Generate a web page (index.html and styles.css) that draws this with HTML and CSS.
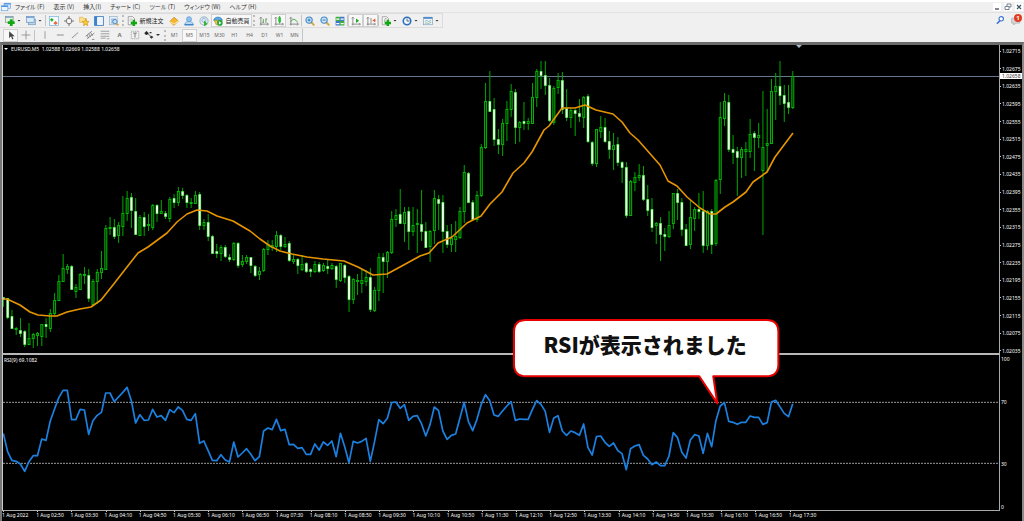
FILE: index.html
```html
<!DOCTYPE html>
<html lang="ja">
<head>
<meta charset="utf-8">
<title>EURUSD,M5</title>
<link rel="stylesheet" href="styles.css">
</head>
<body>
<header class="menubar">
  <svg class="icon" viewBox="0 0 16 16"><rect x="5" y="2" width="10" height="8" fill="#d8ebfc" stroke="#5b9bdc"/><rect x="1" y="6" width="10" height="8" fill="#eef7ff" stroke="#5b9bdc"/><path d="M1 7h10M5 3h10" stroke="#4a90e0" stroke-width="2"/></svg>
  <nav class="menus">
    <button class="menu">ファイル (F)</button>
    <button class="menu">表示 (V)</button>
    <button class="menu">挿入(I)</button>
    <button class="menu">チャート (C)</button>
    <button class="menu">ツール (T)</button>
    <button class="menu">ウィンドウ (W)</button>
    <button class="menu">ヘルプ (H)</button>
  </nav>
  <div class="window-controls">
    <button class="winbtn" aria-label="最小化"><svg viewBox="0 0 8 8"><path d="M2 6h4" stroke="#556" stroke-width="1.4"/></svg></button>
    <button class="winbtn" aria-label="元に戻す"><svg viewBox="0 0 8 8"><path d="M3 3V1h4v3H5M1 3.500h4v3H1z" fill="none" stroke="#567" stroke-width=".8"/></svg></button>
    <button class="winbtn" aria-label="閉じる"><svg viewBox="0 0 8 8"><path d="M2 2l4 4M6 2L2 6" stroke="#456" stroke-width="1.200"/></svg></button>
  </div>
</header>

<div class="toolrow">
  <div class="toolbar framed">
    <button class="tool drop" aria-label="新規チャート"><svg class="icon" viewBox="0 0 16 16"><rect x="1" y="1" width="12" height="9" fill="#e8f3e8" stroke="#6b8a76"/><path d="M1 2h12" stroke="#7fa6c8" stroke-width="2"/><path d="M10 5v11M4.500 10.500h11" stroke="#12a812" stroke-width="4.500"/></svg><i class="caret"></i></button>
    <button class="tool drop" aria-label="定型チャート"><svg class="icon" viewBox="0 0 16 16"><rect x="4" y="5" width="11" height="9" fill="#b9d3ea" stroke="#6f93b5"/><rect x="1" y="1" width="12" height="9" fill="#d9ebfa" stroke="#5c88b4"/><path d="M1 2h12" stroke="#6f9fd0" stroke-width="2"/></svg><i class="caret"></i></button>
    <span class="sep"></span>
    <button class="tool" aria-label="気配値表示"><svg class="icon" viewBox="0 0 16 16"><rect x="1" y="1" width="14" height="14" fill="#f4fbff" stroke="#6aa8d8"/><path d="M4.500 3l3 3-3 3-3-3z" fill="#22b022"/><path d="M10.500 8l3.500 3.500-3.500 3-3.500-3z" fill="#e86a3a"/></svg></button>
    <button class="tool" aria-label="データウィンドウ"><svg class="icon" viewBox="0 0 16 16"><circle cx="8" cy="8" r="4.500" fill="#f7f7f7" stroke="#777" stroke-width="1.500"/><path d="M8 0v5M8 11v5M0 8h5M11 8h5" stroke="#777" stroke-width="1.800"/></svg></button>
    <button class="tool" aria-label="ナビゲーター"><svg class="icon" viewBox="0 0 16 16"><path d="M1 2h5l1 2h5v6H1z" fill="#ffe28a" stroke="#d9a83c"/><path d="M10.500 5l1.600 3.500 3.900.3-3 2.600.9 4-3.400-2-3.400 2 .9-4-3-2.600 3.900-.3z" fill="#ffc93c" stroke="#c98f14"/></svg></button>
    <button class="tool" aria-label="ターミナル"><svg class="icon" viewBox="0 0 16 16"><rect x="1" y="1" width="14" height="14" fill="#fff" stroke="#3f7fc4" stroke-width="1.500"/><rect x="1" y="1" width="4" height="14" fill="#3c82d0"/><path d="M7 5h6M7 8h6M7 11h6" stroke="#c8d6e4"/></svg></button>
    <button class="tool" aria-label="ストラテジーテスター"><svg class="icon" viewBox="0 0 16 16"><rect x="1" y="1" width="12" height="13" fill="#e9f3fb" stroke="#86aac8"/><path d="M3 5h8M3 8h4M3 11h4" stroke="#7ba3c8" stroke-width="1.500"/><circle cx="9.500" cy="9" r="3.500" fill="#bfe0fa" stroke="#4a82b8" stroke-width="1.500"/><path d="M12 12l3 3" stroke="#d9a030" stroke-width="2.500"/></svg></button>
    <span class="grip"></span>
    <button class="tool label"><svg class="icon" viewBox="0 0 16 16"><path d="M2 1h7l3 3v10H2z" fill="#fafafa" stroke="#777"/><path d="M4 5h5M4 8h4" stroke="#999"/><path d="M11 6v10M6 11h10" stroke="#12a812" stroke-width="4"/></svg>新規注文</button>
    <button class="tool" aria-label="メタエディター"><svg class="icon" viewBox="0 0 16 16"><path d="M1 9l7-7 7 6-7 7z" fill="#f6b62c" stroke="#b97b12"/><path d="M1 9l7 4 7-5" fill="none" stroke="#fff0b8" stroke-width="1.500"/></svg></button>
    <button class="tool" aria-label="アカウント"><svg class="icon" viewBox="0 0 16 16"><circle cx="8" cy="5" r="4" fill="#8fc2ef" stroke="#4d90cf"/><path d="M2 11c2-3 10-3 12 0l1 3H1z" fill="#b9dbf7" stroke="#4d90cf"/><path d="M1 14h14" stroke="#3a7fc4" stroke-width="2"/></svg></button>
    <button class="tool" aria-label="シグナル"><svg class="icon" viewBox="0 0 16 16"><circle cx="8" cy="8" r="6.500" fill="none" stroke="#a9bfd0" stroke-width="2"/><circle cx="8" cy="7" r="3.500" fill="#cfe6f6" stroke="#7ba7c8"/><path d="M9 8v7l4-3" fill="#35b435" stroke="#35b435" stroke-width="2"/></svg></button>
    <button class="tool label pressed"><svg class="icon" viewBox="0 0 16 16"><path d="M1 7c1-7 13-7 14 0z" fill="#55a9e6" stroke="#2f78b4"/><path d="M2 7h12l-2 7H5z" fill="#f4c448" stroke="#b88a20"/><circle cx="11" cy="11" r="4.500" fill="#20a838"/><path d="M9.500 8.500v5l4-2.500z" fill="#fff"/></svg>自動売買</button>
    <span class="grip"></span>
    <button class="tool" aria-label="バーチャート"><svg class="icon" viewBox="0 0 16 16"><path d="M3 15V2M1 13h14M1 4l2-2 2 2M13 11l2 2-2 2" fill="none" stroke="#777" stroke-width="1.300"/><path d="M7 5v6M7 10H5M11 4v7M11 5h2" stroke="#5aa05a" stroke-width="1.500"/></svg></button>
    <button class="tool pressed" aria-label="ローソク足"><svg class="icon" viewBox="0 0 16 16"><path d="M3 15V2M1 13h14M1 4l2-2 2 2M13 11l2 2-2 2" fill="none" stroke="#777" stroke-width="1.300"/><path d="M9 0v12" stroke="#159015" stroke-width="1.300"/><rect x="7" y="2" width="4" height="8" fill="#20c030"/></svg></button>
    <button class="tool" aria-label="ラインチャート"><svg class="icon" viewBox="0 0 16 16"><path d="M3 15V2M1 13h14M1 4l2-2 2 2M13 11l2 2-2 2" fill="none" stroke="#777" stroke-width="1.300"/><path d="M3 9c4-6 6-4 11 1" fill="none" stroke="#30a030" stroke-width="1.500"/></svg></button>
    <span class="sep"></span>
    <button class="tool" aria-label="ズームイン"><svg class="icon" viewBox="0 0 16 16"><path d="M10 10l5 5" stroke="#d8a830" stroke-width="3"/><circle cx="6.500" cy="6.500" r="5" fill="#cfe8fb" stroke="#3f86c6" stroke-width="1.800"/><path d="M4 6.500h5M6.500 4v5" stroke="#2f6fb0" stroke-width="1.500"/></svg></button>
    <button class="tool" aria-label="ズームアウト"><svg class="icon" viewBox="0 0 16 16"><path d="M10 10l5 5" stroke="#d8a830" stroke-width="3"/><circle cx="6.500" cy="6.500" r="5" fill="#cfe8fb" stroke="#3f86c6" stroke-width="1.800"/><path d="M4 6.500h5" stroke="#2f6fb0" stroke-width="1.500"/></svg></button>
    <button class="tool" aria-label="整列"><svg class="icon" viewBox="0 0 16 16"><path d="M1 1h7v7H1zM8 8h7v7H8z" fill="#3fae3f"/><path d="M8 1h7v7H8zM1 8h7v7H1z" fill="#3f78c8"/><path d="M2 5h5M9 5h5M2 12h5M9 12h5" stroke="#fff" stroke-width="2"/></svg></button>
    <span class="sep"></span>
    <button class="tool pressed" aria-label="自動スクロール"><svg class="icon" viewBox="0 0 16 16"><path d="M3 15V2M1 13h14M1 4l2-2 2 2M13 11l2 2-2 2" fill="none" stroke="#777" stroke-width="1.300"/><path d="M8 4l5 3.500L8 11z" fill="#25a525"/></svg></button>
    <button class="tool pressed" aria-label="チャートシフト"><svg class="icon" viewBox="0 0 16 16"><path d="M3 15V2M1 13h14M1 4l2-2 2 2M13 11l2 2-2 2M8 3v9" fill="none" stroke="#777" stroke-width="1.300"/><path d="M15 4v6l-5-3z" fill="#d85a30"/></svg></button>
    <span class="sep"></span>
    <button class="tool drop" aria-label="インディケータ"><svg class="icon" viewBox="0 0 16 16"><path d="M2 1h7l3 3v10H2z" fill="#f4f4f4" stroke="#888"/><path d="M6 10c0-6 0-6 3-6" fill="none" stroke="#777"/><path d="M11 6v10M6 11h10" stroke="#12a812" stroke-width="4"/></svg><i class="caret"></i></button>
    <button class="tool drop" aria-label="時間軸"><svg class="icon" viewBox="0 0 16 16"><circle cx="8" cy="8" r="6" fill="#eaf4fd" stroke="#2c6fb8" stroke-width="2.500"/><path d="M8 4v4h4" fill="none" stroke="#456" stroke-width="1.300"/></svg><i class="caret"></i></button>
    <button class="tool drop" aria-label="定型"><svg class="icon" viewBox="0 0 16 16"><rect x="1" y="2" width="14" height="12" fill="#eaf3fb" stroke="#7a9cba"/><path d="M1 3h14" stroke="#4f8ac4" stroke-width="3"/><path d="M3 9l3-2 3 2 4-2M3 12l3-1 3 1 4-2" fill="none" stroke="#6f9f7f"/></svg><i class="caret"></i></button>
  </div>
  <div class="status-icons">
    <button class="tool" aria-label="検索"><svg class="icon" viewBox="0 0 16 16"><path d="M8 9l-5 5" stroke="#3f74d8" stroke-width="2.500"/><circle cx="10" cy="6" r="3.500" fill="#fff" stroke="#3f74d8" stroke-width="1.800"/></svg></button>
    <button class="tool notify" aria-label="通知 1"><svg class="icon" viewBox="0 0 16 16"><path d="M1 5h13v8H8l-4 3v-3H1z" fill="#d4d4d4" stroke="#aaa"/></svg><span class="badge">1</span></button>
  </div>
</div>

<div class="toolrow lower">
  <div class="toolbar second">
    <button class="tool pressed" aria-label="カーソル"><svg class="icon" viewBox="0 0 16 16"><path d="M5 2v11l3-3 2 5 2-1-2-4h4z" fill="#444"/></svg></button>
    <button class="tool" aria-label="クロスヘア"><svg class="icon" viewBox="0 0 16 16"><path d="M8 1v14M1 8h14" stroke="#888" stroke-width="1.300"/></svg></button>
    <span class="sep wide"></span>
    <button class="tool" aria-label="垂直線"><svg class="icon" viewBox="0 0 16 16"><path d="M8 2v12" stroke="#999" stroke-width="1.500"/></svg></button>
    <button class="tool" aria-label="水平線"><svg class="icon" viewBox="0 0 16 16"><path d="M3 8h11" stroke="#888" stroke-width="1.500"/></svg></button>
    <button class="tool" aria-label="トレンドライン"><svg class="icon" viewBox="0 0 16 16"><path d="M3 13L13 4" stroke="#888" stroke-width="1.500"/></svg></button>
    <button class="tool" aria-label="チャネル"><svg class="icon" viewBox="0 0 16 16"><path d="M1 10l10-8M3 14L15 5M3 8l3 5M6 6l3 5M9 4l3 5M11 15h4" stroke="#777" stroke-width="1.300"/></svg></button>
    <button class="tool" aria-label="フィボナッチ"><svg class="icon" viewBox="0 0 16 16"><path d="M1 2h14M1 6h14M1 10h14M1 13h8M11 14h4" stroke="#888" stroke-width="1.200"/></svg></button>
    <button class="tool glyph">A</button>
    <button class="tool" aria-label="ラベル"><svg class="icon" viewBox="0 0 16 16"><rect x="2" y="2" width="12" height="12" fill="none" stroke="#888" stroke-dasharray="2 1"/><path d="M5 5h6M8 5v7" stroke="#777" stroke-width="1.500"/></svg></button>
    <button class="tool drop" aria-label="矢印"><svg class="icon" viewBox="0 0 16 16"><path d="M4 2l3 3-3 3-3-3zM5 5l7 6" fill="#222" stroke="#222"/><path d="M12 9l3 2-3 3-3-3zM9 3h3v2H9z" fill="#333"/></svg><i class="caret"></i></button>
    <span class="grip"></span>
    <button class="tool tf">M1</button>
    <button class="tool tf pressed">M5</button>
    <button class="tool tf">M15</button>
    <button class="tool tf">M30</button>
    <button class="tool tf">H1</button>
    <button class="tool tf">H4</button>
    <button class="tool tf">D1</button>
    <button class="tool tf">W1</button>
    <button class="tool tf">MN</button>
  </div>
</div>

<main class="chart">
  <section class="plot price-plot">
    <svg class="canvas" id="price" viewBox="0 45 996 308" preserveAspectRatio="none">
      <path d="M0 76.500H996" stroke="#64778c" />
      <path d="M793 45h6l-3 3z" fill="#a9b9cc"/>
    </svg>
    <p class="plot-title"><i class="caret"></i>EURUSD,M5&nbsp; 1.02588 1.02669 1.02588 1.02658</p>
  </section>
  <div class="axis price-axis">
    <span>1.02715</span><span>1.02675</span><span>1.02635</span><span>1.02595</span><span>1.02555</span><span>1.02515</span><span>1.02475</span><span>1.02435</span><span>1.02395</span><span>1.02355</span><span>1.02315</span><span>1.02275</span><span>1.02235</span><span>1.02195</span><span>1.02155</span><span>1.02115</span><span>1.02075</span><span>1.02035</span>
    <b class="price-tag">1.02658</b>
  </div>
  <section class="plot rsi-plot">
    <svg class="canvas" id="rsi" viewBox="0 15 2988 465" preserveAspectRatio="none">
      <path class="level" d="M0 157H2988M0 340H2988"/>
    </svg>
    <p class="plot-title">RSI(9) 69.1082</p>
  </section>
  <div class="axis rsi-axis"><span>100</span><i class="gap-outer"></i><span>70</span><i class="gap-mid"></i><span>30</span><i class="gap-outer"></i><span>0</span></div>
  <div class="time-axis">
    <span>1 Aug 2022</span><span>1 Aug 02:50</span><span>1 Aug 03:30</span><span>1 Aug 04:10</span><span>1 Aug 04:50</span><span>1 Aug 05:30</span><span>1 Aug 06:10</span><span>1 Aug 06:50</span><span>1 Aug 07:30</span><span>1 Aug 08:10</span><span>1 Aug 08:50</span><span>1 Aug 09:30</span><span>1 Aug 10:10</span><span>1 Aug 10:50</span><span>1 Aug 11:30</span><span>1 Aug 12:10</span><span>1 Aug 12:50</span><span>1 Aug 13:30</span><span>1 Aug 14:10</span><span>1 Aug 14:50</span><span>1 Aug 15:30</span><span>1 Aug 16:10</span><span>1 Aug 16:50</span><span>1 Aug 17:30</span>
  </div>
  <aside class="callout">
    <svg class="callout-shape" viewBox="0 0 275 90" preserveAspectRatio="none"><path d="M14 4H254Q266 4 266 16V48Q266 60 254 60H201L205 87L187 60H14Q2 60 2 48V16Q2 4 14 4Z" fill="#fff" stroke="#e60000" stroke-width="2" stroke-linejoin="round"/></svg>
    <p class="callout-text">RSIが表示されました</p>
  </aside>
</main>
<script src="chart.js"></script>
</body>
</html>
```
FILE: styles.css
```css
* { box-sizing: border-box; }
body {
  margin: 0;
  min-height: 100vh;
  display: flex;
  flex-direction: column;
  background: #f0f0f0;
  border-top: 2px solid #fff;
  font: 6px/8px "Noto Sans", "Noto Sans CJK JP", sans-serif;
  color: #333;
}
button {
  margin: 0;
  padding: 0;
  border: 1px solid transparent;
  background: none;
  font: inherit;
  color: inherit;
}
p { margin: 0; }

.menubar {
  display: flex;
  align-items: center;
  height: 11px;
  padding-left: 1px;
  border-bottom: 1px solid #e2e2e2;
}
.icon { display: block; width: 10px; height: 10px; flex: none; }
.menus { display: flex; gap: 7px; padding-left: 3px; flex: 1; }
.menu { white-space: nowrap; font-family: "Noto Sans CJK JP", sans-serif; font-feature-settings: "palt"; }
.window-controls { display: flex; gap: 3px; padding-right: 1px; }
.winbtn { width: 8px; height: 8px; background: #fff; border: 0; }
.winbtn svg { display: block; width: 8px; height: 8px; }

.toolrow { display: flex; justify-content: space-between; height: 15px; }
.toolrow.lower { height: 14px; }
.toolbar { display: flex; align-items: center; padding-left: 3px; border: 1px solid transparent; border-left: 0; }
.toolbar.framed { border-color: #dcdcdc; }
.toolbar.second { border-right-color: #c4c4c4; }
.tool {
  position: relative;
  display: flex;
  align-items: center;
  justify-content: center;
  width: 15px;
  height: 13px;
}
.tool.drop { width: 21px; justify-content: flex-start; padding-left: 1px; gap: 2px; }
.tool.label { width: 41px; gap: 2px; white-space: nowrap; font-family: "Noto Sans CJK JP", sans-serif; color: #222; }
.tool.pressed { background: #f8f8f8; border-color: #d0d0d0; }
.tool.glyph { font-weight: bold; color: #777; }
.tool.tf { font-size: 5px; color: #666; }
.caret {
  display: block;
  flex: none;
  width: 4px;
  height: 2px;
  background: currentColor;
  clip-path: polygon(0 0, 100% 0, 50% 100%);
}
.sep { width: 1px; height: 11px; background: #c4c4c4; }
.sep.wide { margin: 0 2px 0 1px; }
.grip { width: 2px; height: 11px; margin: 0 1px; border-left: 2px dotted #bcbcbc; }

.status-icons { display: flex; gap: 1px; padding-right: 1px; }
.badge {
  position: absolute;
  top: 0;
  right: 0;
  width: 8px;
  height: 8px;
  border-radius: 50%;
  background: #e03c20;
  color: #fff;
  text-align: center;
  font-weight: bold;
}

.chart {
  flex: 1;
  position: relative;
  display: grid;
  grid-template-columns: minmax(0, 1fr) 22px;
  grid-template-rows: minmax(0, 310fr) minmax(0, 156fr) 10px;
  border-top: 3px solid #6a6a6a;
  border-left: 2px solid #777;
  border-right: 2px solid #8a8a8a;
  background: #000;
  color: #fff;
  font-size: 5px;
  line-height: 6px;
}
.plot {
  position: relative;
  min-height: 0;
  border-left: 1px solid #ccc;
  border-right: 1px solid #aaa;
}
.price-plot { border-bottom: 2px solid #b8b8b8; }
.rsi-plot { border-bottom: 1px solid #aaa; }
.canvas { position: absolute; inset: 0; width: 100%; height: 100%; }
.plot-title { position: absolute; top: 1px; left: 1px; display: flex; align-items: center; gap: 3px; white-space: nowrap; }
.rsi-plot .plot-title { top: 2px; }
.price-axis { position: relative; display: flex; flex-direction: column; justify-content: space-between; padding: 3px 0 1px; }
.price-axis span { display: flex; align-items: center; gap: 1px; }
.price-axis span::before { content: ""; width: 1px; height: 1px; background: #ccc; }
.price-tag { position: absolute; left: 0; right: 0; top: 9%; padding-left: 2px; background: #fff; color: #333; font-weight: normal; }
.rsi-axis { display: flex; flex-direction: column; padding: 1px 1px; }
.gap-outer { flex: 37; }
.gap-mid { flex: 55; }
.time-axis { grid-column: 1 / -1; display: flex; padding-right: 22px; }
.time-axis span { flex: 0 0 auto; width: 3.428%; white-space: nowrap; }
.time-axis span::before { content: ""; display: block; width: 1px; height: 1px; margin-left: 1px; background: #ccc; }

.level { fill: none; stroke: #999; stroke-dasharray: 2 1; vector-effect: non-scaling-stroke; }
.bull-wick, .bear-wick { fill: #00a800; }
.body-edge { fill: #00b400; }
.bull-core { fill: #002400; }
.bear-core { fill: #e8ffe4; }
.average { fill: none; stroke: #e69500; stroke-width: 1.6; stroke-linejoin: round; }
.rsi-line { fill: none; stroke: #1c80e0; stroke-width: 1.7; stroke-linejoin: round; vector-effect: non-scaling-stroke; }

.callout { position: absolute; left: 50%; top: 57%; width: 27%; height: 19%; }
.callout-shape { position: absolute; inset: 0; width: 100%; height: 100%; }
.callout-text {
  position: relative;
  padding: 13px 9px 0 0;
  text-align: center;
  white-space: nowrap;
  color: #111;
  font: 900 21px/30px "Noto Sans CJK JP", sans-serif;
}
```
FILE: chart.js
```js
const STEP = 4.267;
const NS = "http://www.w3.org/2000/svg";

// One candle per entry: high, body top, body bottom, low; "w" closes down, "g" closes up.
const candles = `297 297 299 306 w|298 298 317 318 w|310 316 328 328 w|327 328 329 334 w|318 330 333 336 w|330 331 344 346 w|323 338 344 344 g|333 334 338 347 g|332 333 335 345 g|324 324 336 345 g
318 324 326 337 w|309 313 328 331 g|293 300 313 316 g|275 281 300 300 g|254 268 281 281 g|264 266 269 273 g|265 266 289 289 w|284 287 291 297 g|273 274 289 289 g|267 274 275 283 w
269 275 298 301 w|279 281 304 305 g|269 272 281 303 g|251 268 272 278 g|225 228 269 269 g|217 227 228 234 g|219 227 236 238 w|222 225 235 242 g|196 213 226 235 g|191 198 213 220 g
193 197 210 227 w|198 211 234 234 w|215 217 235 235 g|212 217 226 235 w|214 224 225 230 g|204 205 227 229 g|204 205 213 221 w|200 211 213 213 g|211 213 216 218 w|197 199 218 221 g
194 198 202 207 w|187 191 202 205 g|188 191 195 198 w|194 195 202 207 w|198 202 203 207 g|191 195 203 203 g|192 194 225 229 w|219 222 225 229 g|214 222 236 240 w|235 236 253 253 w
244 251 253 257 w|245 247 253 260 g|245 247 256 257 w|254 257 259 261 w|242 243 259 260 g|242 243 265 267 w|255 261 264 266 g|255 257 261 263 g|257 257 265 272 w|265 266 275 276 w
267 271 274 279 g|248 249 270 271 g|240 244 249 254 g|240 245 247 250 g|231 235 246 251 g|234 235 246 249 w|237 244 246 247 g|241 243 260 261 w|254 259 261 263 g|258 259 265 273 w
255 264 269 270 g|262 263 271 272 w|268 269 271 276 w|261 264 271 272 g|262 264 271 272 w|263 265 270 271 g|260 266 268 273 w|263 265 268 269 g|265 266 279 287 w|263 263 280 281 g
264 265 277 282 w|275 276 299 311 w|278 279 299 303 g|274 280 281 294 w|269 280 283 292 g|270 277 281 285 g|268 277 309 311 w|287 290 310 311 g|253 257 290 300 g|253 257 261 292 w
251 252 261 277 g|211 219 252 253 g|209 215 219 226 g|189 214 223 223 w|207 212 223 241 g|207 211 231 249 w|207 225 231 235 g|209 223 224 252 g|190 224 231 240 w|222 231 247 247 w
230 231 246 261 g|190 198 230 243 g|195 199 203 229 w|195 202 231 252 w|225 231 244 247 w|224 238 244 251 g|221 236 239 251 g|207 211 237 238 g|165 172 211 222 g|172 173 202 202 w
200 202 219 220 w|191 195 219 221 g|144 147 195 196 g|83 101 147 148 g|71 101 111 111 w|98 109 139 145 w|129 139 144 153 w|119 123 144 155 g|101 109 123 140 g|84 91 109 116 g
89 92 127 143 w|121 122 127 141 g|102 121 123 129 w|118 121 123 129 g|83 97 123 123 g|69 71 97 106 g|61 71 75 88 w|61 75 85 94 w|78 85 120 121 w|86 88 122 124 g
73 80 87 93 g|72 80 109 113 w|89 108 117 120 w|108 110 117 127 g|109 110 113 135 w|99 113 116 121 w|96 97 117 127 g|94 96 141 142 w|141 142 163 165 w|129 129 163 166 g
116 127 131 137 g|118 127 141 142 w|131 141 149 158 w|133 145 149 169 g|137 144 162 165 w|161 162 167 182 w|162 167 215 217 w|180 181 215 215 g|172 177 182 190 g|164 175 177 180 g
166 175 199 200 w|185 199 210 215 w|198 209 227 231 w|222 223 225 243 g|217 223 234 260 w|228 234 236 250 w|211 225 236 237 g|193 193 223 228 g|189 193 202 219 w|198 202 229 235 w
224 229 245 245 w|200 217 244 248 g|207 209 218 230 g|193 209 211 218 w|191 211 245 252 w|210 211 245 249 g|209 211 244 253 w|179 180 243 245 g|102 117 179 193 g|93 101 118 125 g
95 102 149 151 w|135 149 152 163 w|147 151 157 195 w|147 149 157 177 g|142 149 151 175 g|119 134 151 157 g|131 133 137 170 w|123 135 137 147 g|91 147 170 234 g|109 143 145 171 g
79 91 143 143 g|73 86 91 119 g|61 86 95 104 w|85 95 103 121 w|85 102 107 113 w|71 76 107 108 g`
  .split(/[|\n]/).map(s => s.trim().split(" "));

const average = "0,299 4,299 17,305 27,312 35,315 47,316 54,316 64,312 77,309 88,307 98,300 110,285 124,267 135,253 145,247 164,233 174,222 184,214 194,210 204,211 214,216 230,221 247,231 257,239 267,246 277,251 289,254 304,257 320,259 341,261 355,267 370,275 384,274 397,267 417,256 426,253 435,243 449,237 464,223 478,216 487,204 499,192 510,173 521,163 529,152 541,130 546,126 559,108 572,108 582,105 593,110 610,114 619,122 627,133 635,140 657,165 665,181 674,186 684,197 697,208 707,214 713,214 722,207 730,202 743,192 750,182 764,172 772,157 790,133";

const rsi = [
  250,305,331,334,342,364,335,317,317,267,271,213,177,143,121,121,209,209,178,180,
  253,212,196,187,129,129,155,141,127,112,152,219,194,211,210,178,201,197,211,179,
  188,171,181,208,211,191,280,273,302,331,332,314,330,336,276,321,309,296,313,332,
  320,243,234,239,208,242,238,284,283,295,293,313,313,282,300,276,286,273,320,250,
  290,338,274,279,274,265,334,275,209,221,205,158,156,175,164,211,199,197,221,258,
  224,171,182,243,268,256,252,205,157,215,242,208,163,134,152,195,199,183,168,155,
  211,207,208,208,178,152,163,184,247,204,197,243,256,243,248,256,222,292,315,260,
  258,277,289,279,302,311,359,296,288,284,316,327,344,336,347,347,318,248,263,307,
  324,270,254,258,310,250,290,212,168,158,214,217,223,217,217,198,202,202,223,218,
  156,151,170,190,200,161
];

function add(parent, tag, attrs) {
  const node = document.createElementNS(NS, tag);
  for (const key in attrs) node.setAttribute(key, attrs[key]);
  parent.appendChild(node);
}

function bar(parent, cls, center, width, top, bottom) {
  add(parent, "rect", {
    class: cls, x: (center - width / 2).toFixed(2), y: top, width, height: Math.max(bottom - top, 1)
  });
}

const price = document.getElementById("price");
candles.forEach(([high, top, bottom, low, kind], i) => {
  const x = i * STEP + 0.4;
  const [h, t, b, l] = [high, top, bottom, low].map(Number);
  bar(price, kind === "w" ? "bear-wick" : "bull-wick", x, 1, h, l + 1);
  bar(price, "body-edge", x, 3, t, b + 1);
  if (b - t > 1) {
    if (kind === "w") bar(price, "bear-core", x, 2, t + 0.5, b + 0.5);
    else bar(price, "bull-core", x, 1, t + 1, b);
  }
});
add(price, "polyline", { class: "average", points: average });

add(document.getElementById("rsi"), "polyline", {
  class: "rsi-line",
  points: rsi.map((y, i) => `${(i * STEP * 3 + 1).toFixed(1)},${y}`).join(" ")
});
```
